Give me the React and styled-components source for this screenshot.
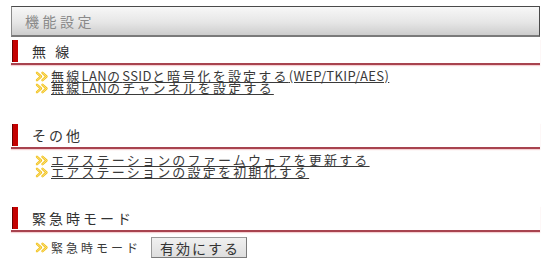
import React from "react";
import styled, { createGlobalStyle } from "styled-components";

const Global = createGlobalStyle`
  html, body { margin: 0; padding: 0; background: #fff; }
  body { font-family: "Noto Sans CJK JP", "Noto Sans", sans-serif; }
`;

const Page = styled.div`
  padding: 6px 3px 0 11px;
`;

const TitleBar = styled.div`
  height: 28px;
  display: flex;
  align-items: center;
  border: 1px solid #4a4a4a;
  border-left-color: #8a8a8a;
  border-bottom: 2px solid #7a7a7a;
  background: linear-gradient(#f7f7f7, #e6e6e6 55%, #cdcdcd);
`;

const Title = styled.span`
  display: inline-block;
  margin-left: 13px;
  color: #8a8a8a;
  font-size: 14px;
  letter-spacing: 3.5px;
`;

const Section = styled.section`
  padding-top: ${(p) => p.$top}px;
`;

const Heading = styled.div`
  height: 24px;
  display: flex;
  align-items: center;
  border-bottom: 2px solid #a8434f;
  box-shadow: 0 1px 1px rgba(230, 120, 130, 0.35);
  padding-left: 1px;
`;

const Bar = styled.span`
  flex: 0 0 6px;
  height: 22px;
  margin-right: 14px;
  background: #c40000;
  border-left: 1px solid #6a0000;
  box-sizing: border-box;
`;

const HeadingText = styled.span`
  display: inline-block;
  font-size: 14px;
  letter-spacing: 3px;
  color: #333;
`;

const List = styled.ul`
  list-style: none;
  margin: 0;
  padding: 5px 0 0 24px;
`;

const Item = styled.li`
  display: flex;
  align-items: center;
  height: 12px;
  font-size: 13px;
  line-height: 12px;
`;

const Link = styled.a`
  color: #3a3a3a;
  text-decoration: underline;
  text-underline-offset: 1px;
  letter-spacing: 2.2px;
  cursor: pointer;
`;

const Latin = styled.span`
  letter-spacing: 0.4px;
`;

const Row = styled.div`
  display: flex;
  align-items: center;
  padding: 5px 0 0 24px;
`;

const Label = styled.span`
  font-size: 12px;
  letter-spacing: 3px;
  color: #3a3a3a;
`;

const Button = styled.button`
  margin: 0 0 0 10px;
  width: 96px;
  height: 21px;
  padding: 0 0 0 2px;
  border: 1px solid #9a9a9a;
  border-right-color: #7a7a7a;
  border-bottom-color: #7a7a7a;
  background: linear-gradient(#f0f0f0, #dedede);
  font-family: inherit;
  font-size: 14px;
  letter-spacing: 2px;
  color: #333;
  display: flex;
  align-items: center;
  justify-content: center;
`;

const Arrow = () => (
  <svg width="16" height="11" viewBox="0 0 16 11" style={{ flexShrink: 0 }}>
    <g fill="none" stroke="#f2c21c" strokeWidth="2.4" strokeLinecap="round" strokeLinejoin="round">
      <path d="M2 1.8 L6 5.5 L2 9.2" />
      <path d="M7.5 1.8 L11.5 5.5 L7.5 9.2" />
    </g>
    <g fill="none" stroke="#fbe79a" strokeWidth="0.8" strokeLinecap="round">
      <path d="M2 1.8 L6 5.5 L2 9.2" />
      <path d="M7.5 1.8 L11.5 5.5 L7.5 9.2" />
    </g>
  </svg>
);

const renderText = (t) =>
  t.split(/([A-Za-z()/]+)/).map((part, i) =>
    /^[A-Za-z()/]+$/.test(part) ? <Latin key={i}>{part}</Latin> : part
  );

const sections = [
  {
    title: "無 線",
    top: 2,
    links: [
      "無線LANのSSIDと暗号化を設定する(WEP/TKIP/AES)",
      "無線LANのチャンネルを設定する",
    ],
  },
  {
    title: "その他",
    top: 29,
    links: [
      "エアステーションのファームウェアを更新する",
      "エアステーションの設定を初期化する",
    ],
  },
];

export default function App() {
  return (
    <>
      <Global />
      <Page>
        <TitleBar>
          <Title>機能設定</Title>
        </TitleBar>
        {sections.map((s) => (
          <Section key={s.title} $top={s.top}>
            <Heading>
              <Bar />
              <HeadingText>{s.title}</HeadingText>
            </Heading>
            <List>
              {s.links.map((l) => (
                <Item key={l}>
                  <Arrow />
                  <Link>{renderText(l)}</Link>
                </Item>
              ))}
            </List>
          </Section>
        ))}
        <Section $top={28}>
          <Heading>
            <Bar />
            <HeadingText>緊急時モード</HeadingText>
          </Heading>
          <Row>
            <Arrow />
            <Label>緊急時モード</Label>
            <Button>有効にする</Button>
          </Row>
        </Section>
      </Page>
    </>
  );
}
